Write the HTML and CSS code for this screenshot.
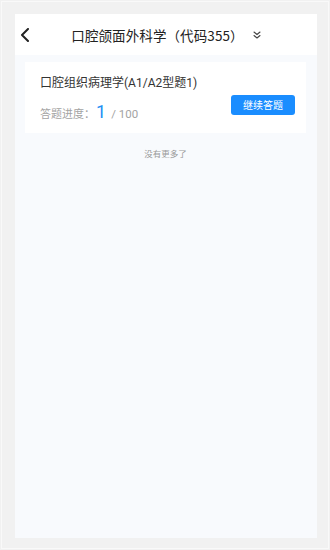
FILE: index.html
```html
<!DOCTYPE html>
<html lang="zh-CN">
<head>
<meta charset="utf-8">
<title>口腔颌面外科学</title>
<link rel="stylesheet" href="styles.css">
</head>
<body>
<div class="frame">
  <div class="panel">
    <header class="nav">
      <span class="back" aria-label="返回">
        <svg width="10" height="14" viewBox="0 0 10 14"><path d="M8 1 L2 7 L8 13" fill="none" stroke="#222" stroke-width="2" stroke-linecap="round" stroke-linejoin="round"/></svg>
      </span>
      <div class="title-group">
        <span class="title">口腔颌面外科学（代码355）</span>
        <svg class="more" width="8" height="8" viewBox="0 0 8 8"><path d="M1 1 L4 3.5 L7 1 M1 4.5 L4 7 L7 4.5" fill="none" stroke="#444" stroke-width="1.1" stroke-linecap="round" stroke-linejoin="round"/></svg>
      </div>
    </header>
    <main class="content">
      <div class="card">
        <div class="card-info">
          <div class="card-title">口腔组织病理学(A1/A2型题1)</div>
          <div class="progress">
            <span class="label">答题进度：</span>
            <span class="current">1</span>
            <span class="total">/ 100</span>
          </div>
        </div>
        <button class="btn">继续答题</button>
      </div>
      <div class="no-more">没有更多了</div>
    </main>
  </div>
</div>
</body>
</html>
```
FILE: styles.css
```css
* { box-sizing: border-box; }
html, body { margin: 0; padding: 0; }
body {
  background: #f1f1f1;
  font-family: Roboto, "Noto Sans CJK SC", sans-serif;
  width: 330px;
  height: 550px;
  overflow: hidden;
}
.frame {
  margin: 1px;
  height: 548px;
  border: 1px solid #f9f9f9;
  padding: 12px 11px 10px 13px;
}
.panel {
  height: 100%;
  background: #f8fafd;
  display: flex;
  flex-direction: column;
}
.nav {
  height: 41px;
  background: #fff;
  display: flex;
  align-items: center;
  justify-content: center;
  position: relative;
}
.back {
  position: absolute;
  left: 5px;
  top: 14px;
  display: flex;
}
.title-group {
  display: flex;
  align-items: center;
  gap: 9px;
  margin-left: 0;
}
.title {
  font-family: "Noto Sans CJK SC", sans-serif;
  font-size: 13.5px;
  color: #222;
  letter-spacing: 0.1px;
}
.more { margin-top: 1px; }
.content {
  flex: 1;
  padding: 7px 11px 0 10px;
}
.card {
  background: #fff;
  height: 71px;
  padding: 13px 11px 0 15px;
  display: flex;
  justify-content: space-between;
  align-items: flex-start;
}
.card-title {
  font-family: Roboto, "Noto Sans CJK SC", sans-serif;
  font-size: 12px;
  line-height: 17px;
  color: #333;
}
.progress {
  margin-top: 9px;
  display: flex;
  align-items: baseline;
  height: 22px;
  line-height: 22px;
}
.label {
  font-family: "Noto Sans CJK SC", sans-serif;
  font-size: 11px;
  color: #a3a3a3;
}
.current {
  font-size: 18px;
  color: #1f8ff4;
  margin-left: 1px;
  margin-right: 5px;
}
.total {
  font-size: 11.5px;
  color: #a3a3a3;
}
.btn {
  margin-top: 20px;
  width: 64px;
  height: 20px;
  border: none;
  border-radius: 3px;
  background: #1a8dff;
  color: #fff;
  font-family: "Noto Sans CJK SC", sans-serif;
  font-size: 10px;
  padding: 0;
  line-height: 20px;
}
.no-more {
  margin-top: 14px;
  text-align: center;
  font-family: "Noto Sans CJK SC", sans-serif;
  font-size: 8.5px;
  color: #999;
  line-height: 12px;
}
```
